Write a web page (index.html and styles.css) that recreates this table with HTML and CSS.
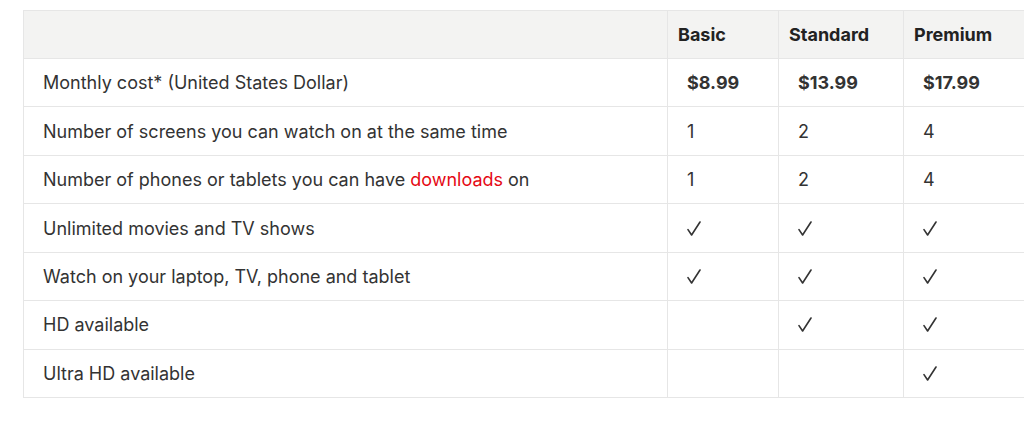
FILE: index.html
```html
<!DOCTYPE html>
<html lang="en">
<head>
<meta charset="utf-8">
<title>Plans</title>
<link rel="stylesheet" href="styles.css">
</head>
<body>
<div class="wrap">
<table class="plans">
  <colgroup>
    <col class="c-feature"><col class="c-basic"><col class="c-standard"><col class="c-premium">
  </colgroup>
  <thead>
    <tr><th></th><th>Basic</th><th>Standard</th><th>Premium</th></tr>
  </thead>
  <tbody>
    <tr><td>Monthly cost* (United States Dollar)</td><td class="price">$8.99</td><td class="price">$13.99</td><td class="price">$17.99</td></tr>
    <tr><td>Number of screens you can watch on at the same time</td><td>1</td><td>2</td><td>4</td></tr>
    <tr><td>Number of phones or tablets you can have <a class="link" href="#">downloads</a> on</td><td>1</td><td>2</td><td>4</td></tr>
    <tr><td>Unlimited movies and TV shows</td>
      <td class="chk"><svg class="tick" viewBox="0 0 14 15"><path d="M1 8.6 L4.6 14 L13 1"/></svg></td>
      <td class="chk"><svg class="tick" viewBox="0 0 14 15"><path d="M1 8.6 L4.6 14 L13 1"/></svg></td>
      <td class="chk"><svg class="tick" viewBox="0 0 14 15"><path d="M1 8.6 L4.6 14 L13 1"/></svg></td></tr>
    <tr><td>Watch on your laptop, TV, phone and tablet</td>
      <td class="chk"><svg class="tick" viewBox="0 0 14 15"><path d="M1 8.6 L4.6 14 L13 1"/></svg></td>
      <td class="chk"><svg class="tick" viewBox="0 0 14 15"><path d="M1 8.6 L4.6 14 L13 1"/></svg></td>
      <td class="chk"><svg class="tick" viewBox="0 0 14 15"><path d="M1 8.6 L4.6 14 L13 1"/></svg></td></tr>
    <tr><td>HD available</td><td></td>
      <td class="chk"><svg class="tick" viewBox="0 0 14 15"><path d="M1 8.6 L4.6 14 L13 1"/></svg></td>
      <td class="chk"><svg class="tick" viewBox="0 0 14 15"><path d="M1 8.6 L4.6 14 L13 1"/></svg></td></tr>
    <tr><td>Ultra HD available</td><td></td><td></td>
      <td class="chk"><svg class="tick" viewBox="0 0 14 15"><path d="M1 8.6 L4.6 14 L13 1"/></svg></td></tr>
  </tbody>
</table>
</div>
</body>
</html>
```
FILE: styles.css
```css
html, body { margin: 0; padding: 0; background: #fff; overflow: hidden; }
body { font-family: "Inter", "Noto Sans", sans-serif; color: #333; }
.wrap { padding: 10px 0 0 23px; width: 1100px; }
.plans {
  border-collapse: collapse;
  table-layout: fixed;
  width: 1021px;
  border: 1px solid #dcdcdc;
  font-size: 18px;
}
.c-feature { width: 644px; }
.c-basic { width: 111px; }
.c-standard { width: 125px; }
.c-premium { width: 141px; }
.plans th, .plans td {
  padding: 0 0 0 19px;
  text-align: left;
  vertical-align: middle;
  border: 1px solid #e6e6e6;
  box-sizing: border-box;
}
.plans th {
  height: 48px;
  background: #f3f3f2;
  font-weight: 700;
  color: #222;
  padding-left: 10px;
}
.plans td { height: 48.45px; color: #333; }
.plans thead tr { border-bottom: 1px solid #dcdcdc; }
.price { font-weight: 700; color: #222; }
.plans td.chk { padding-left: 19px; line-height: 0; }
.tick {
  display: inline-block;
  width: 14px;
  height: 15px;
  fill: none;
  stroke: #333;
  stroke-width: 1.6;
  stroke-linecap: round;
  stroke-linejoin: round;
}
.link { color: #e50914; text-decoration: none; }
```
